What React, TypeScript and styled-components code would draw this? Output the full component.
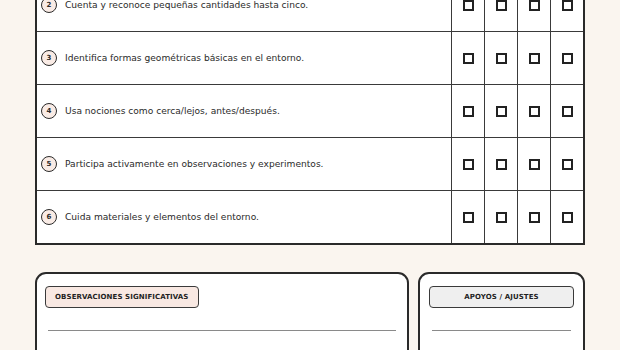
import React from "react";
import styled, { createGlobalStyle } from "styled-components";

const Global = createGlobalStyle`
  html, body { margin: 0; padding: 0; background: #faf5ef; }
  body { font-family: "DejaVu Sans", "Noto Sans", sans-serif; color: #2b2b2b; }
  *, *::before, *::after { box-sizing: border-box; }
`;

const Page = styled.div`
  width: 550px;
  margin: -21px auto 0;
  display: flex;
  flex-direction: column;
  gap: 27px;
`;

const Table = styled.div`
  background: #ffffff;
  border: 2px solid #2a2a2a;
  border-top: none;
  display: flex;
  flex-direction: column;
`;

const Row = styled.div<{ $last?: boolean }>`
  display: grid;
  grid-template-columns: 1fr repeat(4, 33px);
  height: ${(p) => (p.$last ? "52px" : "53px")};
  border-bottom: ${(p) => (p.$last ? "none" : "1px solid #3a3a3a")};
`;

const ItemCell = styled.div`
  display: flex;
  align-items: center;
  gap: 8px;
  padding-left: 4px;
  font-size: 9.1px;
  color: #2a2a2a;
`;

const Num = styled.span`
  width: 16px;
  height: 16px;
  border: 1.5px solid #2a2a2a;
  border-radius: 50%;
  background: #f9ebe5;
  display: flex;
  align-items: center;
  justify-content: center;
  font-size: 7px;
  font-weight: 700;
  flex-shrink: 0;
`;

const CheckCell = styled.div`
  border-left: 1px solid #3a3a3a;
  display: flex;
  align-items: center;
  justify-content: center;
`;

const Box = styled.span`
  width: 11px;
  height: 11px;
  border: 2px solid #222;
  background: #fff;
`;

const Cards = styled.div`
  display: grid;
  grid-template-columns: 374px 1fr;
  gap: 9px;
`;

const Card = styled.div<{ $pad: number }>`
  background: #ffffff;
  border: 2px solid #2a2a2a;
  border-radius: 11px;
  height: 110px;
  padding: 12px ${(p) => p.$pad}px 0;
  display: flex;
  flex-direction: column;
  align-items: flex-start;
`;

const Label = styled.div<{ $tone: "rose" | "gray"; $wide?: boolean }>`
  height: 22px;
  padding: 0 9px;
  display: flex;
  align-items: center;
  justify-content: center;
  align-self: ${(p) => (p.$wide ? "stretch" : "flex-start")};
  background: ${(p) => (p.$tone === "rose" ? "#f8e8e2" : "#efefef")};
  border: 1.5px solid #3a3a3a;
  border-radius: 4px;
  font-size: 7px;
  font-weight: 700;
  letter-spacing: 0.1px;
  color: #1f1f1f;
  text-transform: uppercase;
`;

const Line = styled.div<{ $inset: number }>`
  align-self: stretch;
  margin: 22px ${(p) => p.$inset}px 0;
  border-top: 1px solid #8a8a8a;
`;

const items = [
  { n: 2, t: "Cuenta y reconoce pequeñas cantidades hasta cinco." },
  { n: 3, t: "Identifica formas geométricas básicas en el entorno." },
  { n: 4, t: "Usa nociones como cerca/lejos, antes/después." },
  { n: 5, t: "Participa activamente en observaciones y experimentos." },
  { n: 6, t: "Cuida materiales y elementos del entorno." },
];

export default function App() {
  return (
    <>
      <Global />
      <Page>
        <Table>
          {items.map((it, i) => (
            <Row key={it.n} $last={i === items.length - 1}>
              <ItemCell>
                <Num>{it.n}</Num>
                <span>{it.t}</span>
              </ItemCell>
              {[0, 1, 2, 3].map((c) => (
                <CheckCell key={c}>
                  <Box />
                </CheckCell>
              ))}
            </Row>
          ))}
        </Table>
        <Cards>
          <Card $pad={8}>
            <Label $tone="rose">Observaciones significativas</Label>
            <Line $inset={3} />
          </Card>
          <Card $pad={9}>
            <Label $tone="gray" $wide>Apoyos / Ajustes</Label>
            <Line $inset={3} />
          </Card>
        </Cards>
      </Page>
    </>
  );
}
